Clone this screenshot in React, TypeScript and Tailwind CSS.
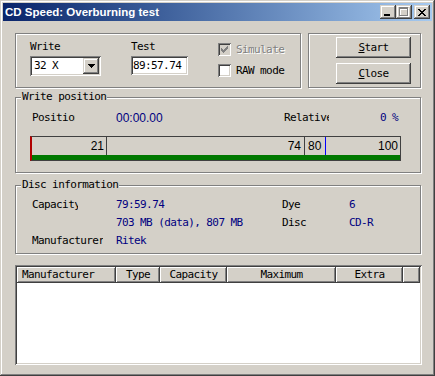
import React from "react";

// classic win2000 dialog look
const mono = "font-['DejaVu_Sans_Mono',monospace] text-[11px] tracking-[-0.6px] leading-[12px]";
const sans = "font-['Liberation_Sans',Arial,sans-serif]";

const btnRaised =
	"shadow-[inset_-1px_-1px_#404040,inset_1px_1px_#fff,inset_-2px_-2px_#808080]";
const capRaised =
	"shadow-[inset_-1px_-1px_#404040,inset_1px_1px_#d4d0c8,inset_-2px_-2px_#808080,inset_2px_2px_#fff]";
const sunken =
	"shadow-[inset_1px_1px_#808080,inset_-1px_-1px_#fff,inset_2px_2px_#404040,inset_-2px_-2px_#d4d0c8]";

interface IGroup {
	title?: string;
	className?: string;
	children?: React.ReactNode;
}

const Group: React.FC<IGroup> = ({ title, className, children }) => {
	return (
		<div
			className={`relative border border-[#808080] shadow-[inset_1px_1px_#fff,1px_1px_#fff] ${className ?? ""}`}>
			{title && (
				<span className={`absolute left-[5px] -top-[7px] bg-[#d4d0c8] px-[1px] ${mono}`}>
					{title}
				</span>
			)}
			{children}
		</div>
	);
};

const CheckBox: React.FC<{ checked?: boolean; disabled?: boolean; label: string }> = ({
	checked,
	disabled,
	label,
}) => {
	return (
		<div className="flex items-center gap-[5px]">
			<div
				className={`w-[13px] h-[13px] flex items-center justify-center ${sunken} ${disabled ? "bg-[#d4d0c8]" : "bg-white"}`}>
				{checked && (
					<svg width="7" height="7" viewBox="0 0 7 7" shapeRendering="crispEdges">
						<path
							d="M0 2h1v3h-1zM1 3h1v3h-1zM2 4h1v3h-1zM3 3h1v3h-1zM4 2h1v3h-1zM5 1h1v3h-1zM6 0h1v3h-1z"
							fill={disabled ? "#808080" : "#000"}
						/>
					</svg>
				)}
			</div>
			<span
				className={`${mono} ${disabled ? "text-[#808080] [text-shadow:1px_1px_0_#fff]" : "text-black"}`}>
				{label}
			</span>
		</div>
	);
};

const PushButton: React.FC<{ hot: string; rest: string }> = ({ hot, rest }) => {
	return (
		<div
			className={`w-[75px] h-[21px] bg-[#d4d0c8] flex items-center justify-center ${btnRaised} ${mono}`}>
			<span className="underline underline-offset-[1px]">{hot}</span>
			<span>{rest}</span>
		</div>
	);
};

const columns = [
	{ name: "Manufacturer", w: "w-[99px]", align: "justify-start pl-[5px]" },
	{ name: "Type", w: "w-[44px]", align: "justify-center" },
	{ name: "Capacity", w: "w-[67px]", align: "justify-center" },
	{ name: "Maximum", w: "w-[109px]", align: "justify-center" },
	{ name: "Extra", w: "w-[67px]", align: "justify-center" },
];

export default function App() {
	return (
		<div
			className={`w-[435px] h-[376px] bg-[#d4d0c8] p-[3px] flex flex-col text-black shadow-[inset_-1px_-1px_#404040,inset_1px_1px_#d4d0c8,inset_-2px_-2px_#808080,inset_2px_2px_#fff]`}>
			{/* title bar */}
			<div className="h-[18px] shrink-0 flex items-center bg-gradient-to-r from-[#0a246a] to-[#a6caf0] pl-[2px] pr-[2px]">
				<span
					className={`flex-1 text-white font-bold text-[11.5px] leading-[14px] ${sans}`}>
					CD Speed: Overburning test
				</span>
				<div className="flex items-center">
					<div className={`w-[16px] h-[14px] bg-[#d4d0c8] relative ${capRaised}`}>
						<div className="absolute left-[4px] top-[9px] w-[6px] h-[2px] bg-black" />
					</div>
					<div className={`w-[16px] h-[14px] bg-[#d4d0c8] flex items-center justify-center ${capRaised}`}>
						<svg width="10" height="10" viewBox="0 0 10 10" shapeRendering="crispEdges">
							<path d="M1 1h9v9h-9zM2 3h7v6h-7z" fill="#fff" fillRule="evenodd" />
							<path d="M0 0h9v9h-9zM1 2h7v6h-7z" fill="#808080" fillRule="evenodd" />
						</svg>
					</div>
					<div className={`ml-[2px] w-[16px] h-[14px] bg-[#d4d0c8] flex items-center justify-center ${capRaised}`}>
						<svg width="8" height="7" viewBox="0 0 8 7" shapeRendering="crispEdges">
							<path
								d="M0 0h2v1h-2zM6 0h2v1h-2zM1 1h2v1h-2zM5 1h2v1h-2zM2 2h4v1h-4zM3 3h2v1h-2zM2 4h4v1h-4zM1 5h2v1h-2zM5 5h2v1h-2zM0 6h2v1h-2zM6 6h2v1h-2z"
								fill="#000"
							/>
						</svg>
					</div>
				</div>
			</div>

			{/* client */}
			<div className="flex-1 flex flex-col pt-[12px] pl-[12px]">
				<div className="flex gap-[7px]">
					<Group className="w-[286px] h-[55px] flex items-start">
						<div className="ml-[14px] w-[71px] pt-[7px] flex flex-col">
							<span className={mono}>Write</span>
							<div className={`mt-[3px] h-[20px] bg-white flex items-center relative ${sunken}`}>
								<span className={`pl-[4px] ${mono}`}>32 X</span>
								<div
									className={`absolute right-[2px] top-[2px] w-[16px] h-[16px] bg-[#d4d0c8] flex items-center justify-center ${capRaised}`}>
									<svg width="7" height="4" viewBox="0 0 7 4" shapeRendering="crispEdges">
										<path d="M0 0h7v1h-7zM1 1h5v1h-5zM2 2h3v1h-3zM3 3h1v1h-1z" fill="#000" />
									</svg>
								</div>
							</div>
						</div>
						<div className="ml-[30px] w-[57px] pt-[7px] flex flex-col">
							<span className={mono}>Test</span>
							<div className={`mt-[3px] h-[19px] bg-white flex items-center ${sunken}`}>
								<span className={`pl-[2px] ${mono}`}>89:57.74</span>
							</div>
						</div>
						<div className="ml-[30px] pt-[9px] flex flex-col gap-[8px]">
							<CheckBox checked disabled label="Simulate" />
							<CheckBox label="RAW mode" />
						</div>
					</Group>
					<Group className="w-[113px] h-[55px]">
						<div className="ml-[27px] pt-[3px] flex flex-col gap-[5px]">
							<PushButton hot="S" rest="tart" />
							<PushButton hot="C" rest="lose" />
						</div>
					</Group>
				</div>

				<Group title="Write position" className="mt-[9px] w-[406px] h-[76px]">
					<div className="pt-[14px] pl-[16px] flex items-center h-[26px]">
						<div className="w-[84px]">
							<div className={`w-[43px] overflow-hidden whitespace-nowrap ${mono}`}>Position</div>
						</div>
						<div className={`w-[168px] text-[12px] leading-[12px] text-[#000080] ${sans}`}>00:00.00</div>
						<div className={`w-[45px] overflow-hidden whitespace-nowrap ${mono}`}>Relative</div>
						<div className={`w-[69px] text-right whitespace-pre text-[#000080] ${mono}`}>0 %</div>
					</div>
					<div className="mt-[12px] ml-[14px] w-[371px] h-[25px] flex flex-col border-t border-r border-b border-[#404040] border-l-2 border-l-[#b00000]">
						<div className={`flex-1 flex text-[12px] leading-[12px] ${sans}`}>
							<div className="w-[75px] border-r border-[#404040] flex items-center justify-end pr-[2px]">21</div>
							<div className="w-[198px] border-r border-[#404040] flex items-center justify-end pr-[3px]">74</div>
							<div className="w-[21px] border-r border-[#0000ff] flex items-center pl-[3px]">80</div>
							<div className="flex-1 flex items-center justify-end pr-[2px]">100</div>
						</div>
						<div className="h-[5px] bg-[#007800]" />
					</div>
				</Group>

				<Group title="Disc information" className="mt-[12px] w-[406px] h-[69px]">
					<div className={`pt-[10px] pl-[16px] flex flex-col ${mono} leading-[18px]`}>
						<div className="flex">
							<div className="w-[84px]">
								<div className="w-[46px] overflow-hidden whitespace-nowrap">Capacity</div>
							</div>
							<div className="w-[166px] text-[#000080]">79:59.74</div>
							<div className="w-[67px]">Dye</div>
							<div className="text-[#000080]">6</div>
						</div>
						<div className="flex">
							<div className="w-[84px]" />
							<div className="w-[166px] text-[#000080] whitespace-pre">703 MB (data), 807 MB</div>
							<div className="w-[67px]">Disc</div>
							<div className="text-[#000080]">CD-R</div>
						</div>
						<div className="flex">
							<div className="w-[84px]">
								<div className="w-[71px] overflow-hidden whitespace-nowrap">Manufacturer</div>
							</div>
							<div className="text-[#000080]">Ritek</div>
						</div>
					</div>
				</Group>

				<div className={`mt-[11px] w-[407px] h-[100px] bg-white p-[2px] ${sunken}`}>
					<div className="flex h-[16px] bg-[#d4d0c8]">
						{columns.map((c) => (
							<div key={c.name} className={`${c.w} h-full flex items-center ${c.align} ${btnRaised} ${mono}`}>
								{c.name}
							</div>
						))}
						<div className={`flex-1 h-full ${btnRaised}`} />
					</div>
				</div>
			</div>
		</div>
	);
}
